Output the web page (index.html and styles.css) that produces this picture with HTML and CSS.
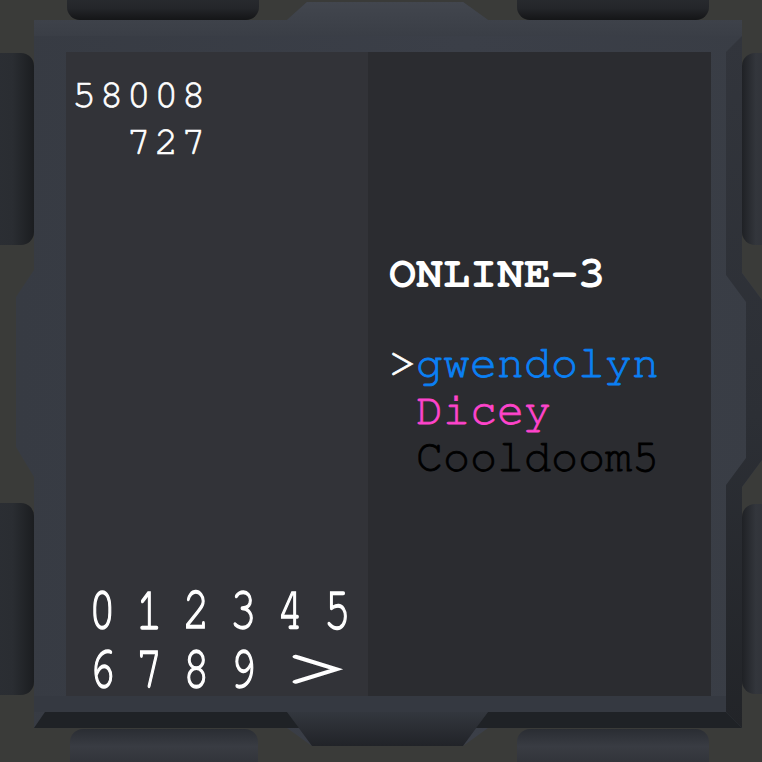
FILE: index.html
```html
<!DOCTYPE html>
<html lang="en">
<head>
<meta charset="utf-8">
<title>Lobby screen</title>
<link rel="stylesheet" href="styles.css">
</head>
<body>
<div class="stage">
  <svg class="frame" viewBox="0 0 762 762" width="762" height="762" aria-hidden="true">
    <defs>
      <linearGradient id="pillTop" x1="0" y1="0" x2="0" y2="1">
        <stop offset="0" stop-color="#2f3237"/>
        <stop offset="0.7" stop-color="#24262a"/>
        <stop offset="1" stop-color="#141517"/>
      </linearGradient>
      <linearGradient id="pillBottom" x1="0" y1="0" x2="0" y2="1">
        <stop offset="0" stop-color="#2a2d33"/>
        <stop offset="0.35" stop-color="#393c43"/>
        <stop offset="1" stop-color="#2a2c31"/>
      </linearGradient>
      <linearGradient id="pillLeft" x1="0" y1="0" x2="1" y2="0">
        <stop offset="0" stop-color="#2c2f35"/>
        <stop offset="0.6" stop-color="#2a2d32"/>
        <stop offset="1" stop-color="#1b1d20"/>
      </linearGradient>
      <linearGradient id="pillRight" x1="0" y1="0" x2="1" y2="0">
        <stop offset="0" stop-color="#1f2125"/>
        <stop offset="0.35" stop-color="#33363c"/>
        <stop offset="1" stop-color="#2c2e33"/>
      </linearGradient>
      <linearGradient id="raise" x1="0" y1="0" x2="0" y2="1">
        <stop offset="0" stop-color="#42464e"/>
        <stop offset="1" stop-color="#3a3e46"/>
      </linearGradient>
      <linearGradient id="sink" x1="0" y1="0" x2="0" y2="1">
        <stop offset="0" stop-color="#33373e"/>
        <stop offset="1" stop-color="#212328"/>
      </linearGradient>
      <linearGradient id="rim" x1="0" y1="0" x2="0" y2="1">
        <stop offset="0" stop-color="#32353c"/>
        <stop offset="0.55" stop-color="#2c2f35"/>
        <stop offset="1" stop-color="#222428"/>
      </linearGradient>
      <linearGradient id="leftBand" x1="0" y1="0" x2="1" y2="0">
        <stop offset="0" stop-color="#373b43"/>
        <stop offset="0.6" stop-color="#3b3f48"/>
        <stop offset="1" stop-color="#393d45"/>
      </linearGradient>
    </defs>
    <rect width="762" height="762" fill="#3a3b39"/>
    <rect x="67" y="-20" width="192" height="40" rx="13" fill="url(#pillTop)"/>
    <rect x="517" y="-20" width="192" height="40" rx="13" fill="url(#pillTop)"/>
    <rect x="-20" y="53" width="54" height="192" rx="13" fill="url(#pillLeft)"/>
    <rect x="-20" y="503" width="54" height="192" rx="13" fill="url(#pillLeft)"/>
    <rect x="742" y="53" width="40" height="192" rx="13" fill="url(#pillRight)"/>
    <rect x="742" y="504" width="40" height="190" rx="13" fill="url(#pillRight)"/>
    <rect x="70" y="729" width="188" height="50" rx="13" fill="url(#pillBottom)"/>
    <rect x="517" y="729" width="192" height="50" rx="13" fill="url(#pillBottom)"/>
    <polygon fill="url(#leftBand)" points="34,20 287,20 307,2 463,2 488,20 742,20 742,273 762,300 762,460 742,487 742,728 488,728 463,746 312,746 287,728 34,728 34,477 16,447 16,297 34,270"/>
    <polygon fill="url(#raise)" points="287,20 307,2 463,2 488,20 742,20 742,36 34,36 34,20"/>
    <polygon fill="url(#rim)" points="726,52 742,36 742,273 762,300 762,460 742,487 742,728 726,712 726,485 746,458 746,302 726,275"/>
    <rect x="34" y="696" width="692" height="16" fill="#353941"/>
    <polygon fill="url(#sink)" points="287,712 488,712 463,746 312,746"/>
    <polygon fill="#1f2226" points="34,728 45,712 287,712 299,728"/>
    <polygon fill="#1f2226" points="476,728 488,712 726,712 742,728"/>
  </svg>

  <section class="panel panel-left">
    <div class="score">
      <div class="score-line">58008</div>
      <div class="score-line">727</div>
    </div>
    <div class="keypad">
      <button class="key" type="button"><span class="glyph">0</span></button>
      <button class="key" type="button"><span class="glyph">1</span></button>
      <button class="key" type="button"><span class="glyph">2</span></button>
      <button class="key" type="button"><span class="glyph">3</span></button>
      <button class="key" type="button"><span class="glyph">4</span></button>
      <button class="key" type="button"><span class="glyph">5</span></button>
      <button class="key" type="button"><span class="glyph">6</span></button>
      <button class="key" type="button"><span class="glyph">7</span></button>
      <button class="key" type="button"><span class="glyph">8</span></button>
      <button class="key" type="button"><span class="glyph">9</span></button>
      <button class="key key-next" type="button"><span class="glyph glyph-next">&gt;</span></button>
    </div>
  </section>

  <section class="panel panel-right">
    <h1 class="title">ONLINE-3</h1>
    <ul class="players">
      <li class="player"><span class="cursor">&gt;</span><span class="name name-blue">gwendolyn</span></li>
      <li class="player"><span class="cursor"> </span><span class="name name-pink">Dicey</span></li>
      <li class="player"><span class="cursor"> </span><span class="name name-black">Cooldoom5</span></li>
    </ul>
  </section>
</div>
</body>
</html>
```

FILE: styles.css
```css
* {
  box-sizing: border-box;
}

html,
body {
  margin: 0;
  padding: 0;
  background: #3a3b39;
}

.stage {
  position: relative;
  width: 762px;
  height: 762px;
  overflow: hidden;
  padding: 52px 51px 66px 66px;
  display: grid;
  grid-template-columns: 302px 343px;
  font-family: "Nimbus Mono PS", "FreeMono", "Liberation Mono", "Courier New", monospace;
  color: #ffffff;
}

.frame {
  position: absolute;
  left: 0;
  top: 0;
  z-index: 0;
}

.panel {
  position: relative;
  z-index: 1;
  display: flex;
  flex-direction: column;
}

.panel-left {
  background: #323338;
  justify-content: space-between;
}

.panel-right {
  background: #2b2c30;
  padding: 198px 0 0 21px;
}

.score {
  align-self: flex-start;
  padding: 20px 0 0 6px;
  text-align: right;
  font-size: 40px;
  line-height: 47px;
  letter-spacing: 3.4px;
  -webkit-text-stroke: 0.7px #ffffff;
}

.keypad {
  display: grid;
  grid-template-columns: repeat(6, 47px);
  grid-auto-rows: 48px;
  row-gap: 11px;
  margin: 0 0 3px 13px;
}

.key {
  margin: 0;
  padding: 0;
  border: 0;
  background: none;
  color: #ffffff;
  font-family: inherit;
  font-size: 61px;
  line-height: 48px;
  height: 48px;
  display: flex;
  justify-content: center;
  align-items: center;
  overflow: visible;
  -webkit-text-stroke: 1.4px #ffffff;
}

.glyph {
  display: inline-block;
  transform: scaleX(0.74);
  line-height: 48px;
}

.key-next {
  grid-column: 5 / span 2;
}

.glyph-next {
  transform: translate(3px, 0) scale(1.85, 1.02);
  font-size: 56px;
}

.title {
  margin: 0 0 43px;
  font-size: 45px;
  line-height: 47px;
  font-weight: bold;
  letter-spacing: 0;
}

.players {
  list-style: none;
  margin: 0;
  padding: 0;
  font-size: 45px;
  line-height: 47px;
  letter-spacing: 0;
  -webkit-text-stroke: 0.8px currentColor;
}

.player {
  white-space: pre;
}

.cursor {
  color: #ffffff;
}

.name-blue {
  color: #0a80f5;
}

.name-pink {
  color: #ff44cc;
}

.name-black {
  color: #000000;
}
```
